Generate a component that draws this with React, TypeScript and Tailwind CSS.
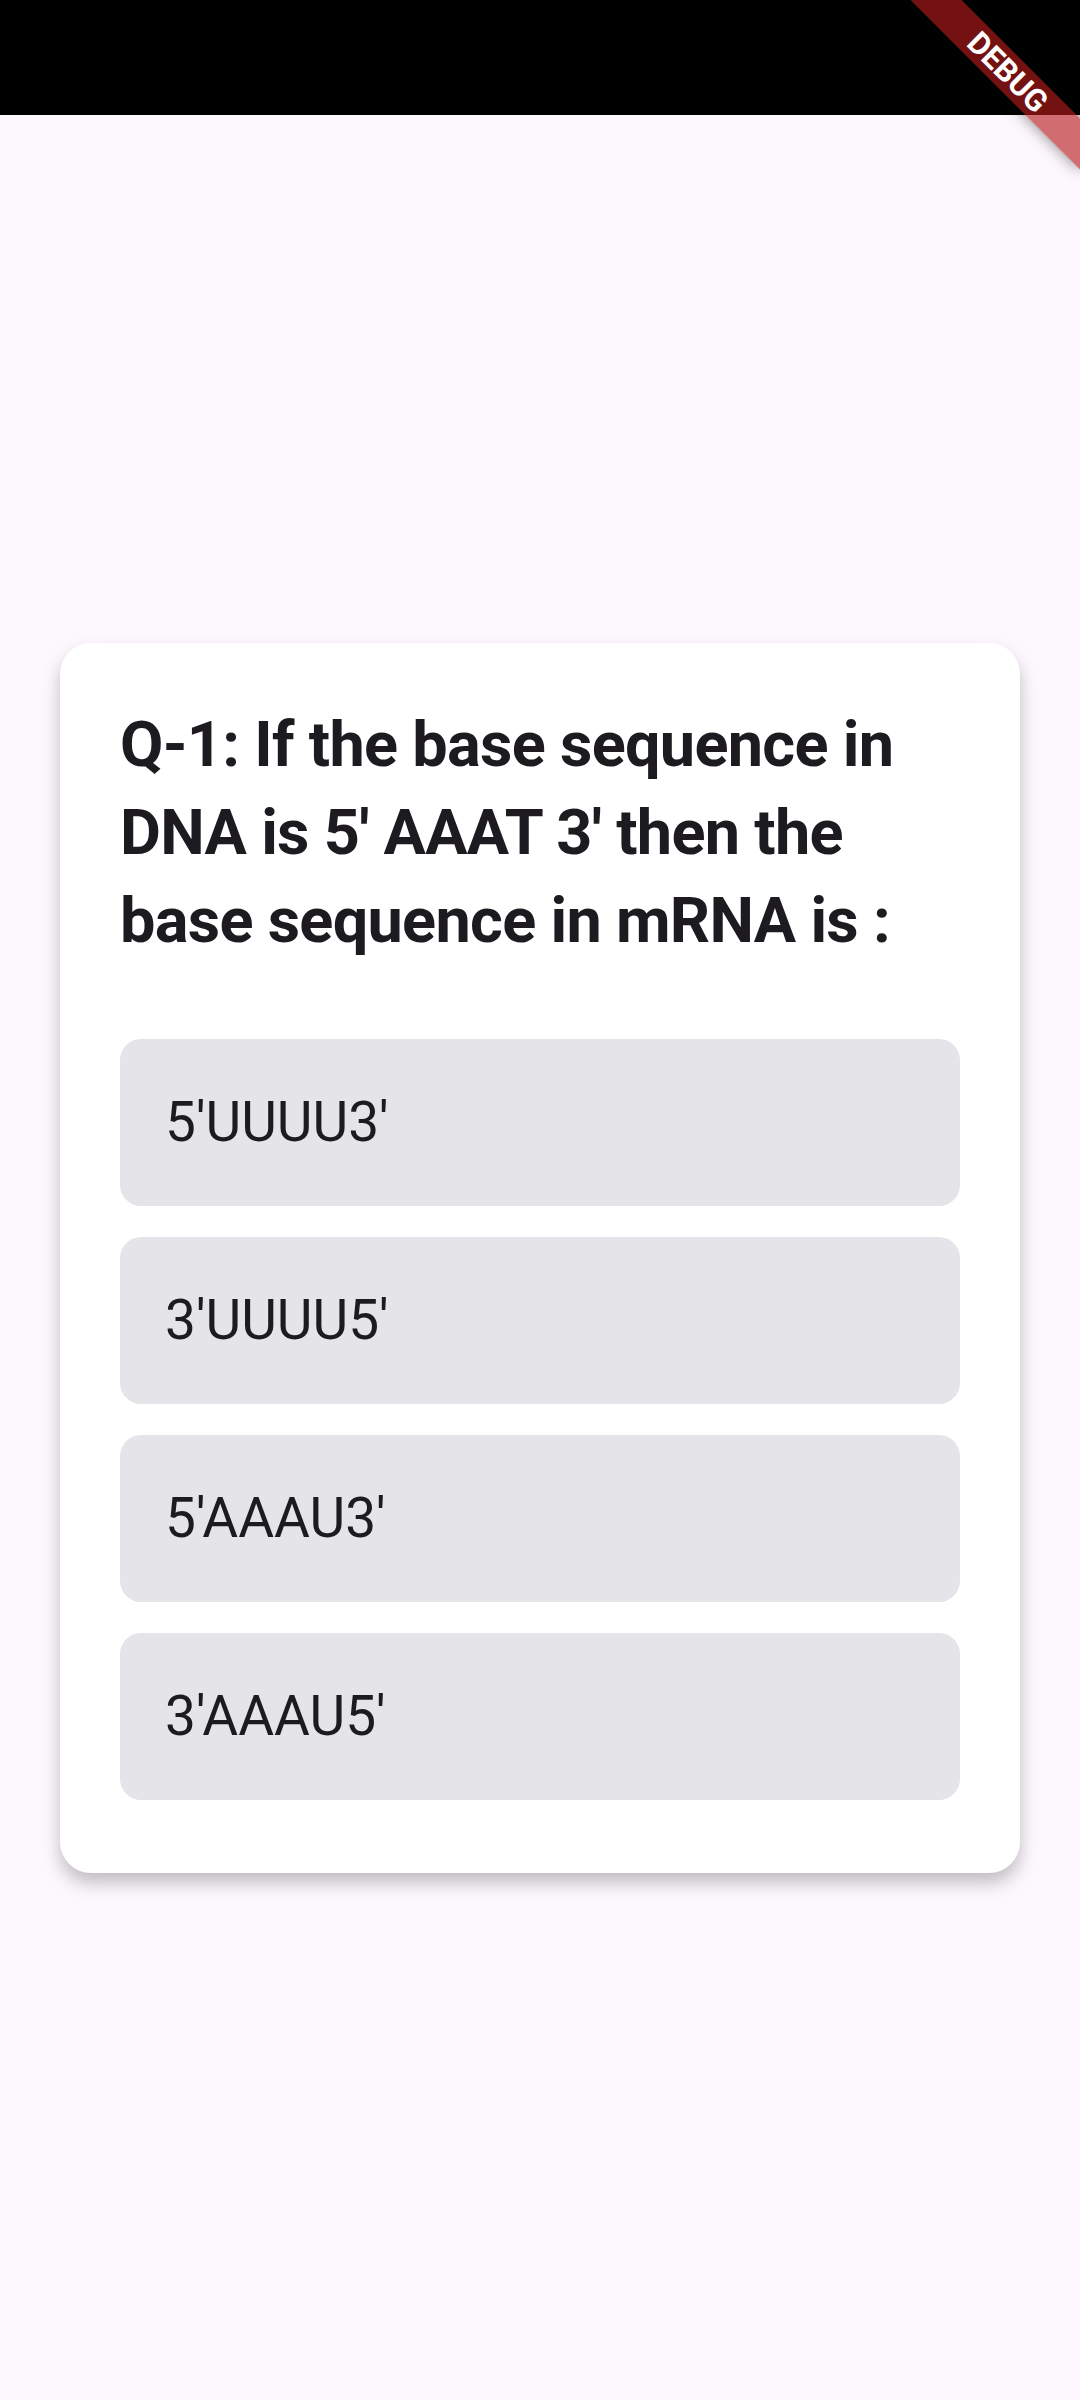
const OPTIONS = ["5'UUUU3'", "3'UUUU5'", "5'AAAU3'", "3'AAAU5'"];

function DebugBanner() {
  return (
    <div className="pointer-events-none absolute left-[888px] top-[54px] flex h-[36px] w-[240px] rotate-45 items-center justify-center bg-[rgba(183,28,28,0.63)] shadow-[0_0_16px_rgba(0,0,0,0.45)]">
      <span className="text-[31px] leading-none font-bold text-white">DEBUG</span>
    </div>
  );
}

export default function App() {
  return (
    <div className="relative flex min-h-[2400px] w-[1080px] flex-col overflow-hidden bg-[#fdf7fe] font-['Roboto',sans-serif] text-[#1d1b20]">
      <div className="h-[115px] shrink-0 bg-black" />
      <div className="flex flex-1 items-center justify-center px-[60px]">
        <div className="w-full rounded-[31px] bg-white px-[60px] pt-[58px] pb-[73px] shadow-[0_10px_18px_rgba(0,0,0,0.24)]">
          <h1 className="mb-[74px] text-[63px] leading-[88px] font-bold tracking-[-0.7px]">
            Q-1: If the base sequence in DNA is 5' AAAT 3' then the base sequence in mRNA is :
          </h1>
          <div className="flex flex-col gap-[31px]">
            {OPTIONS.map((opt) => (
              <div key={opt} className="flex h-[167px] items-center rounded-[21px] bg-[#e5e4e9] pl-[45px] text-[55px]">
                {opt}
              </div>
            ))}
          </div>
        </div>
      </div>
      <DebugBanner />
    </div>
  );
}
